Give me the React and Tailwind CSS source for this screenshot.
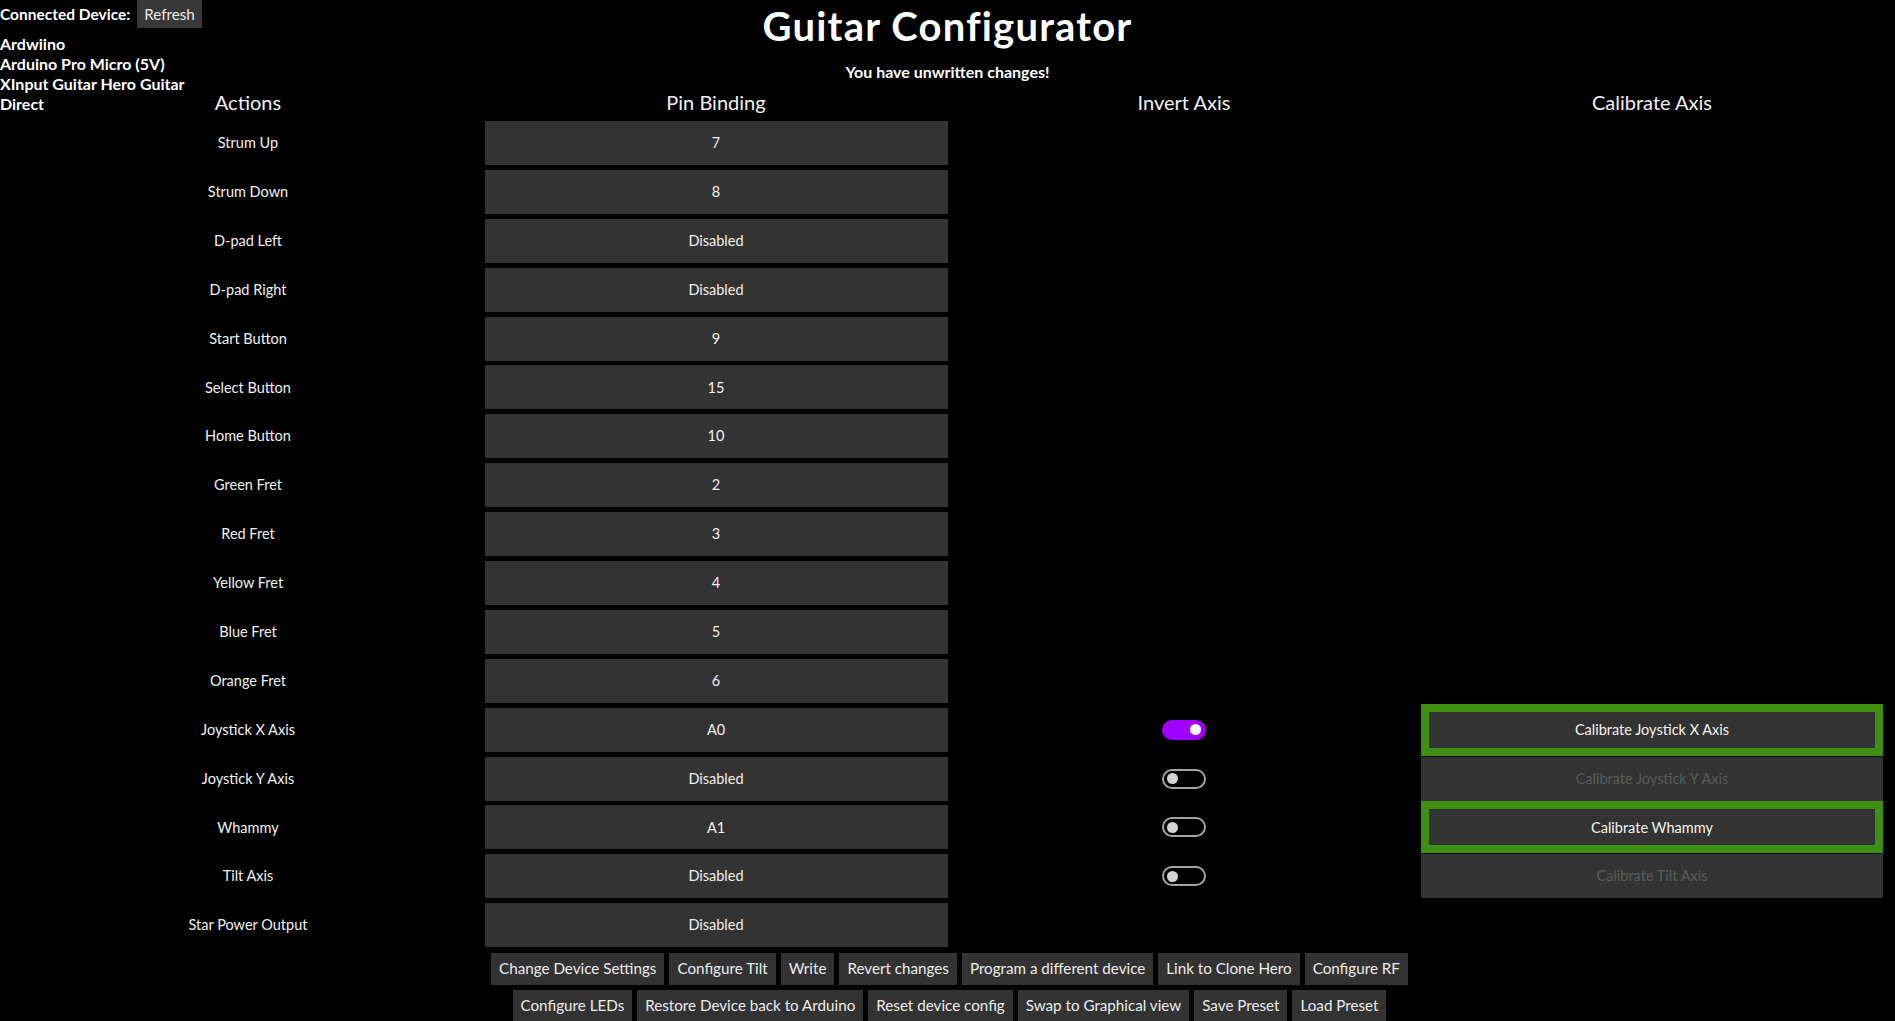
import React from "react";

const rows = [
  { label: "Strum Up", pin: "7" },
  { label: "Strum Down", pin: "8" },
  { label: "D-pad Left", pin: "Disabled" },
  { label: "D-pad Right", pin: "Disabled" },
  { label: "Start Button", pin: "9" },
  { label: "Select Button", pin: "15" },
  { label: "Home Button", pin: "10" },
  { label: "Green Fret", pin: "2" },
  { label: "Red Fret", pin: "3" },
  { label: "Yellow Fret", pin: "4" },
  { label: "Blue Fret", pin: "5" },
  { label: "Orange Fret", pin: "6" },
  { label: "Joystick X Axis", pin: "A0", toggle: true, on: true, cal: "Calibrate Joystick X Axis", active: true },
  { label: "Joystick Y Axis", pin: "Disabled", toggle: true, on: false, cal: "Calibrate Joystick Y Axis", active: false },
  { label: "Whammy", pin: "A1", toggle: true, on: false, cal: "Calibrate Whammy", active: true },
  { label: "Tilt Axis", pin: "Disabled", toggle: true, on: false, cal: "Calibrate Tilt Axis", active: false },
  { label: "Star Power Output", pin: "Disabled" },
];

const bottom1 = [
  "Change Device Settings",
  "Configure Tilt",
  "Write",
  "Revert changes",
  "Program a different device",
  "Link to Clone Hero",
  "Configure RF",
];
const bottom2 = [
  "Configure LEDs",
  "Restore Device back to Arduino",
  "Reset device config",
  "Swap to Graphical view",
  "Save Preset",
  "Load Preset",
];

function Toggle({ on }) {
  if (on) {
    return (
      <div className="w-[44px] h-[20px] rounded-full bg-[#a000ff] flex items-center justify-end pr-[5px]">
        <div className="w-[11px] h-[11px] rounded-full bg-white" />
      </div>
    );
  }
  return (
    <div className="w-[44px] h-[20px] rounded-full border-2 border-[#a3a3a3] flex items-center justify-start pl-[3px]">
      <div className="w-[11px] h-[11px] rounded-full bg-[#d4d4d4]" />
    </div>
  );
}

function Cal({ text, active }) {
  if (active) {
    return (
      <div className="w-[462px] h-[52px] border-8 border-[#3f8f10] bg-[#333333] flex items-center justify-center text-[14.5px] text-[#f2f2f2] shrink-0">
        {text}
      </div>
    );
  }
  return (
    <div className="w-[462px] h-[44px] bg-[#333333] flex items-center justify-center text-[14.5px] text-[#5c5c5c]">
      {text}
    </div>
  );
}

export default function App() {
  return (
    <div className="w-[1895px] h-[1021px] overflow-hidden bg-black text-white font-[Lato,sans-serif]">
      <div className="grid grid-cols-[200px_1fr_200px] h-[91px]">
        <div className="w-[200px]">
          <div className="flex items-center h-[28px] whitespace-nowrap">
            <span className="font-bold text-[15.5px] leading-[20px]">Connected Device:</span>
            <span className="ml-[7px] h-[28px] px-[7px] bg-[#383838] flex items-center text-[15.2px] text-[#e8e8e8]">Refresh</span>
          </div>
          <div className="mt-[6px] font-bold text-[16px] leading-[20px]">
            <div>Ardwiino</div>
            <div>Arduino Pro Micro (5V)</div>
            <div>XInput Guitar Hero Guitar Direct</div>
          </div>
        </div>
        <div className="flex flex-col items-center">
          <h1 className="mt-[2px] text-[40px] leading-[48px] font-bold tracking-[1.2px]">Guitar Configurator</h1>
          <div className="mt-[12px] text-[16px] leading-[20px] font-bold">You have unwritten changes!</div>
        </div>
        <div />
      </div>

      <div className="ml-[14px] w-[1872px] grid grid-cols-[468px_468px_468px_468px]">
        {["Actions", "Pin Binding", "Invert Axis", "Calibrate Axis"].map((h) => (
          <div key={h} className="h-[27.5px] text-center text-[20px] leading-[23px] text-[#f0f0f0]">
            {h}
          </div>
        ))}
        {rows.map((r) => (
          <React.Fragment key={r.label}>
            <div className="h-[48.9px] flex items-center justify-center text-[14.5px] text-[#f0f0f0]">{r.label}</div>
            <div className="h-[48.9px] flex items-center justify-center">
              <div className="w-[463px] h-[44px] bg-[#333333] flex items-center justify-center text-[14.5px] text-[#f0f0f0]">{r.pin}</div>
            </div>
            <div className="h-[48.9px] flex items-center justify-center">{r.toggle ? <Toggle on={r.on} /> : null}</div>
            <div className="h-[48.9px] flex items-center justify-center">{r.cal ? <Cal text={r.cal} active={r.active} /> : null}</div>
          </React.Fragment>
        ))}
      </div>

      <div className="mt-[3px] flex flex-col items-center gap-[5px] pl-[4px]">
        <div className="flex gap-[5px]">
          {bottom1.map((b) => (
            <div key={b} className="h-[32px] px-[8px] bg-[#333333] flex items-center text-[15.2px] text-[#ececec]">{b}</div>
          ))}
        </div>
        <div className="flex gap-[5px]">
          {bottom2.map((b) => (
            <div key={b} className="h-[32px] px-[8px] bg-[#333333] flex items-center text-[15.2px] text-[#ececec]">{b}</div>
          ))}
        </div>
      </div>
    </div>
  );
}
